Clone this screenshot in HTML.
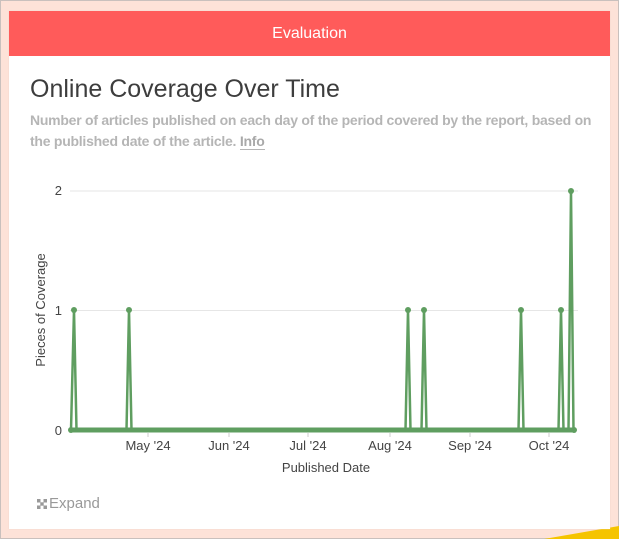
<!DOCTYPE html>
<html><head><meta charset="utf-8"><style>
html,body{margin:0;padding:0;width:619px;height:539px;overflow:hidden;background:#fde2d8;font-family:"Liberation Sans",sans-serif;position:relative}
.frame{position:absolute;left:0;top:0;width:617px;height:537px;border:1px solid #c9c0bd}
.corner{position:absolute;right:0;bottom:0;width:0;height:0;border-left:75px solid transparent;border-bottom:13px solid #f5c400}
.card{position:absolute;left:9px;top:11px;width:601px;height:518px;background:#fff;box-shadow:0 0 1px #e8cfc6;z-index:1}
.hdr{height:45px;background:#ff5b5a;color:#fff;font-size:16px;text-align:center;line-height:46px}
h1{position:absolute;left:21px;top:64px;margin:0;font-weight:normal;font-size:25px;color:#3d3d3d}
.desc{position:absolute;left:21px;top:99px;width:580px;font-size:14px;font-weight:bold;color:#b5b5b5;line-height:21px;letter-spacing:-0.25px}
.desc u{text-decoration:none;border-bottom:1px solid #b5b5b5;color:#a9a9a9}
.exp{position:absolute;font-size:15px;color:#999;z-index:2}
svg{z-index:2}
</style></head><body>
<div class="frame"></div>
<div class="corner"></div>
<div class="card">
<div class="hdr">Evaluation</div>
<h1>Online Coverage Over Time</h1>
<div class="desc">Number of articles published on each day of the period covered by the report, based on the published date of the article. <u>Info</u></div>
</div>
<svg style="position:absolute;left:0;top:0" width="619" height="539">
<g stroke="#e6e6e6" stroke-width="1">
<line x1="70" y1="191" x2="578" y2="191"/><line x1="70" y1="310.5" x2="578" y2="310.5"/>
</g>
<g stroke="#ccc"><line x1="148" y1="433" x2="148" y2="437"/><line x1="229" y1="433" x2="229" y2="437"/><line x1="308" y1="433" x2="308" y2="437"/><line x1="390" y1="433" x2="390" y2="437"/><line x1="470" y1="433" x2="470" y2="437"/><line x1="549" y1="433" x2="549" y2="437"/></g>
<g font-size="13" fill="#444" font-family="Liberation Sans,sans-serif">
<text x="62" y="195" text-anchor="end">2</text>
<text x="62" y="315" text-anchor="end">1</text>
<text x="62" y="435" text-anchor="end">0</text>
<g text-anchor="middle">
<text x="148" y="450">May '24</text><text x="229" y="450">Jun '24</text><text x="308" y="450">Jul '24</text><text x="390" y="450">Aug '24</text><text x="470" y="450">Sep '24</text><text x="549" y="450">Oct '24</text>
<text x="326" y="472">Published Date</text>
</g>
<text transform="translate(45,310) rotate(-90)" text-anchor="middle">Pieces of Coverage</text>
</g>
<line x1="71" y1="430" x2="574" y2="430" stroke="#5f9e60" stroke-width="5"/>
<polyline fill="none" stroke="#5f9e60" stroke-width="2.5" stroke-linejoin="round" points="71,430 74,310 76.5,430 126.5,430 129,310 131.5,430 405.5,430 408,310 410.5,430 421.5,430 424,310 426.5,430 518.5,430 521,310 523.5,430 558.5,430 561,310 563.5,430 568.5,430 571,191 573.5,430 574,430"/>
<g fill="#5f9e60"><circle cx="74" cy="310" r="3"/><circle cx="129" cy="310" r="3"/><circle cx="408" cy="310" r="3"/><circle cx="424" cy="310" r="3"/><circle cx="521" cy="310" r="3"/><circle cx="561" cy="310" r="3"/><circle cx="571" cy="191" r="3"/><circle cx="71" cy="430" r="3"/><circle cx="574" cy="430" r="3"/></g>
<g fill="#999"><rect x="37" y="499" width="3.5" height="3.5"/><rect x="43.5" y="499" width="3.5" height="3.5"/><rect x="37" y="505.5" width="3.5" height="3.5"/><rect x="43.5" y="505.5" width="3.5" height="3.5"/><rect x="40.3" y="502.3" width="3.4" height="3.4"/></g>
</svg>
<div class="exp" style="left:49px;top:495px">Expand</div>
</body></html>
